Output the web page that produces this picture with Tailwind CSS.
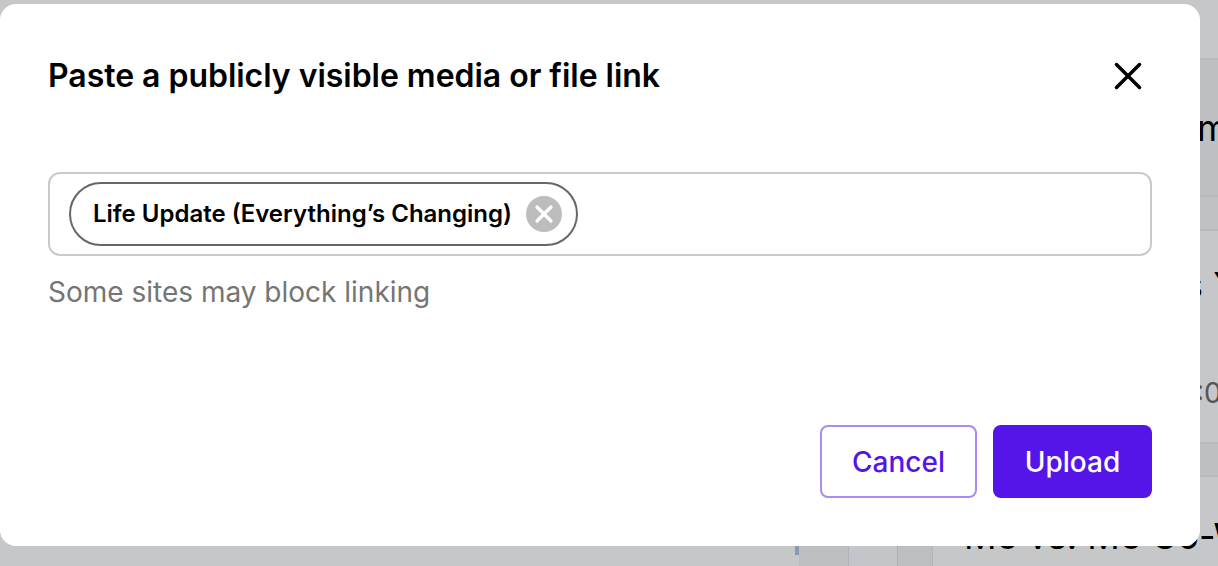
<!DOCTYPE html>
<html lang="en">
<head>
  <meta charset="UTF-8">
  <title>Upload link</title>
  <script src="https://cdn.jsdelivr.net/npm/@tailwindcss/browser@4"></script>
</head>
<body class="relative w-[1218px] h-[566px] overflow-hidden bg-[#c6c7c9] font-['Inter',sans-serif]">

  <!-- page behind the overlay -->
  <div class="flex h-full">
    <div class="w-[933px] h-full flex justify-end items-end">
      <div class="w-1 h-[9px] mb-[11px] bg-[#8a99ad]"></div>
      <div class="w-[50px] h-5 bg-[#bdbec2] border-r border-[#aeb4bd]"></div>
      <div class="w-[49px] h-5 bg-[#c4c5c8] border-r border-[#aeb0b5]"></div>
      <div class="w-[35px] h-5 bg-[#bdbec2] border-r border-[#b3b4b7]"></div>
    </div>
    <div class="flex-1 h-full pt-[58px] text-[36px] leading-10 text-black whitespace-nowrap overflow-hidden">
      <div class="h-[137px] border-t-2 border-[#b8b9bc] bg-[#bebfc2] pl-[264px] pt-[48px]">m</div>
      <div class="h-[34px] border-t-2 border-[#b8b9bc] bg-[#c0c1c4]"></div>
      <div class="h-[213px] border-t-2 border-[#b8b9bc] pl-[251px] pt-[34px]">
        <div>s You</div>
        <div class="mt-[72px] pl-3 text-[28px] leading-8 text-[#555]">:00</div>
      </div>
      <div class="h-[35px] border-y-2 border-[#b8b9bc] bg-[#bebfc2]"></div>
      <div class="pl-[31px] pt-[39px]">Me vs. Me Co-Work</div>
    </div>
  </div>

  <!-- modal -->
  <div class="absolute left-0 top-1 w-[1200px] h-[542px] bg-white rounded-2xl p-12 flex flex-col">
    <div class="flex items-center justify-between h-12">
      <h2 class="text-[32px] leading-[48px] font-semibold text-black tracking-[-0.03px]">Paste a publicly visible media or file link</h2>
      <svg class="w-12 h-12" viewBox="0 0 48 48" fill="none" stroke="#000" stroke-width="3.5" stroke-linecap="round">
        <path d="M12.5 12.5L35.5 35.5M35.5 12.5L12.5 35.5"/>
      </svg>
    </div>
    <div class="mt-[72px] h-[84px] border-2 border-[#c9c9c9] rounded-xl flex items-center pl-[19px]">
      <div class="flex items-center h-16 pl-[22px] pr-[14px] gap-[14px] border-2 border-[#66666b] rounded-full">
        <span class="text-2xl font-semibold text-black whitespace-nowrap">Life Update (Everything’s Changing)</span>
        <span class="w-9 h-9 rounded-full bg-[#bdbdbd] flex items-center justify-center">
          <svg class="w-6 h-6" viewBox="0 0 24 24" fill="none" stroke="#fff" stroke-width="3.2" stroke-linecap="round"><path d="M5 5L19 19M19 5L5 19"/></svg>
        </span>
      </div>
    </div>
    <p class="mt-4 text-[28px] leading-10 text-[#757575]">Some sites may block linking</p>
    <div class="mt-auto flex justify-end gap-4">
      <button class="w-[157px] h-[73px] border-2 border-[#a98bf5] rounded-lg text-[28px] font-medium text-[#5514e8]">Cancel</button>
      <button class="w-[159px] h-[73px] bg-[#5514e8] rounded-lg text-[28px] font-medium text-white">Upload</button>
    </div>
  </div>
</body>
</html>
